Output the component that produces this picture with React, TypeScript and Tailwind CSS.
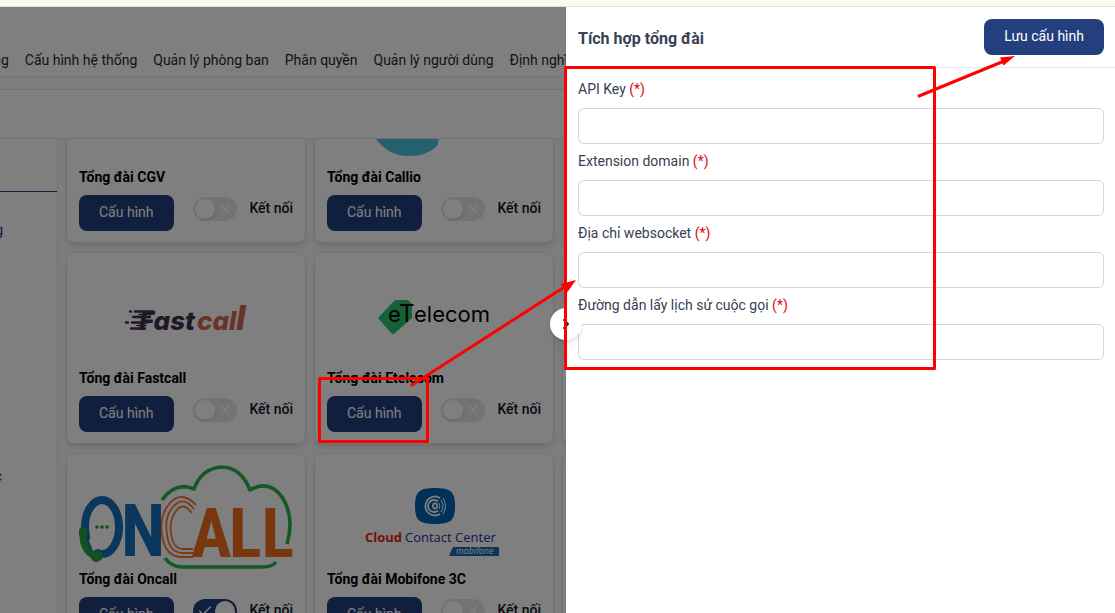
import { useState } from "react"
import type { ReactNode } from "react"
import { Check, ChevronRight, X } from "lucide-react"
import clsx from "clsx"

const navItems = [
  "ng",
  "Cấu hình hệ thống",
  "Quản lý phòng ban",
  "Phân quyền",
  "Quản lý người dùng",
  "Định nghĩ",
]

const fields = [
  { id: "api-key", label: "API Key" },
  { id: "extension-domain", label: "Extension domain" },
  { id: "websocket", label: "Địa chỉ websocket" },
  { id: "call-history", label: "Đường dẫn lấy lịch sử cuộc gọi" },
]

function CallioLogo() {
  return (
    <svg viewBox="0 0 214 104" className="h-[104px] w-full" aria-hidden="true">
      <path d="M43 66 Q56 93 82 93 Q100 93 110 83 Q112 79 112 70 V40 H43Z" fill="#4cc3e0" />
    </svg>
  )
}

function FastcallLogo() {
  return (
    <svg viewBox="0 0 214 104" className="h-[104px] w-full" aria-hidden="true">
      <g stroke="#43304f" strokeWidth="2.4" strokeLinecap="round">
        <path d="M56 47.5H74M51 47.5h1M54 53H71M53 58.5H68M47 58.5h2M52 64.5H66" />
        <path d="M60 50.5H72M58 61.5H67" strokeWidth="1.5" />
      </g>
      <g fontFamily="Inter, sans-serif" fontWeight="800" fontStyle="italic">
        <text x="60" y="66" fontSize="26" fill="#43304f">Fast</text>
        <text x="118" y="66" fontSize="26" fill="#d2664f">cal</text>
        <text x="157" y="66" fontSize="34" fill="#d2664f">l</text>
      </g>
    </svg>
  )
}

function EtelecomLogo() {
  return (
    <svg viewBox="0 0 214 104" className="h-[104px] w-full" aria-hidden="true">
      <path d="M51 54 L67 37 Q68 36 70 36 H80 Q81 36 82 37 L85 40 V54 L68 69 Q66 71 64 69Z" fill="#2bc46c" />
      <g fontFamily="Inter, sans-serif" fill="#000">
        <text x="61" y="58" fontSize="22">e</text>
        <text x="72" y="58" fontSize="24">T</text>
        <text x="87" y="58" fontSize="22">elecom</text>
      </g>
    </svg>
  )
}

function OncallLogo() {
  return (
    <svg viewBox="0 0 214 104" className="h-[104px] w-full" aria-hidden="true">
      <g fill="none" stroke="#2cb04a" strokeWidth="3.6" strokeLinejoin="round">
        <path d="M83 35 Q97 16 115 24 Q122 4 142 2 Q162 2 171 25 Q190 14 203 32 Q216 52 208 79" />
        <path d="M86 93 Q92 102 104 102 H184 Q193 102 197 97" />
      </g>
      {/* speech bubble with the handset */}
      <ellipse cx="23" cy="62" rx="17" ry="27" fill="none" stroke="#186eb8" strokeWidth="8" />
      <path d="M10 76 L13 68 L19 84 L14 86Z" fill="#fff" />
      <g fill="none" stroke="#24a53c" strokeLinecap="round">
        <path d="M4 67 Q3 86 18 92" strokeWidth="7" />
        <path d="M4 66 V69" strokeWidth="8" />
        <path d="M17 92 L19 91" strokeWidth="10" />
      </g>
      <g fill="#24a53c">
        <circle cx="18" cy="62" r="1.8" />
        <circle cx="23" cy="62" r="1.8" />
        <circle cx="28" cy="62" r="1.8" />
      </g>
      <g fill="none" stroke="#f0743a" strokeWidth="1.8">
        <path d="M117 40 Q103 25 91 38 Q80 50 83 70 Q86 92 103 92 H114" />
        <path d="M115 44 Q104 30 94 42 Q85 52 88 69 Q90 88 104 88 H114" />
        <path d="M113 48 Q104 36 97 46 Q90 55 92 68 Q94 84 104 84 H114" />
      </g>
      <g fontFamily="'Roboto Condensed', 'Liberation Sans Narrow', 'Liberation Sans', sans-serif" fontWeight="700">
        <text x="42" y="91" fontSize="72" fill="#186eb8">N</text>
        <text x="112" y="92" fontSize="68" fill="#f26f21">A</text>
        <text x="150" y="92" fontSize="68" fill="#f26f21">LL</text>
      </g>
    </svg>
  )
}

function MobifoneLogo() {
  return (
    <svg viewBox="0 0 214 104" className="h-[104px] w-full" aria-hidden="true">
      <path d="M108 23 C124 23 128 27 128 41 C128 55 124 59 108 59 C92 59 88 55 88 41 C88 27 92 23 108 23Z" fill="#0063b2" />
      <g fill="none" stroke="#fff">
        <path d="M113 33 A9.5 9.5 0 1 0 113 49" strokeWidth="1.8" />
        <path d="M111 36.5 A6 6 0 1 0 111 45.5" strokeWidth="1.8" />
        <ellipse cx="108" cy="41" rx="2.2" ry="2.6" strokeWidth="1.6" />
        <path d="M112 38 q2 3 0 6M114 35 q4 6 0 12M116 33 q5 8 0 16" strokeWidth="1" />
      </g>
      <g fontFamily="'Open Sans', sans-serif" fontSize="13">
        <text x="38" y="77" fill="#e8230c" fontWeight="700">Cloud</text>
        <text x="78" y="77" fill="#1f2f98" fontWeight="500">Contact Center</text>
      </g>
      <path d="M126 82 H172 V91 H122Z" fill="#1b69b5" />
      <text x="129" y="89" fontFamily="'DejaVu Sans', sans-serif" fontSize="8" fontStyle="italic" fill="#fff">
        mobifone
      </text>
    </svg>
  )
}

interface Provider {
  id: string
  name: string
  logo: ReactNode
  connected?: boolean
}

// null = thẻ nằm sau ngăn kéo
const providers: (Provider | null)[] = [
  { id: "cgv", name: "Tổng đài CGV", logo: <div className="h-[104px]" /> },
  { id: "callio", name: "Tổng đài Callio", logo: <CallioLogo /> },
  null,
  { id: "fastcall", name: "Tổng đài Fastcall", logo: <FastcallLogo /> },
  { id: "etelecom", name: "Tổng đài Etelecom", logo: <EtelecomLogo /> },
  null,
  { id: "oncall", name: "Tổng đài Oncall", logo: <OncallLogo />, connected: true },
  { id: "mobifone", name: "Tổng đài Mobifone 3C", logo: <MobifoneLogo /> },
  null,
]

function ConnectSwitch({ id, defaultOn }: { id: string; defaultOn?: boolean }) {
  const [on, setOn] = useState(!!defaultOn)

  return (
    <label htmlFor={id} className="flex h-7 items-center gap-3 text-sm font-medium text-gray-900">
      <span className="relative flex">
        <input
          id={id}
          type="checkbox"
          checked={on}
          onChange={e => setOn(e.target.checked)}
          className="h-6 w-11 appearance-none rounded-full bg-gray-200 checked:bg-[#233f7e]"
        />
        <span
          className={clsx(
            "absolute top-0.5 size-5 rounded-full bg-white shadow",
            on ? "right-0.5" : "left-0.5"
          )}
        />
        {on ? (
          <Check className="absolute top-1 left-1 size-4 text-white" />
        ) : (
          <X className="absolute top-1 right-1 size-4 text-white" />
        )}
      </span>
      <span className="pb-0.5">Kết nối</span>
    </label>
  )
}

function ProviderCard({ provider }: { provider: Provider | null }) {
  return (
    <li className="h-48 rounded-lg border border-gray-200 bg-white px-3 py-[11px] shadow-md">
      {provider && (
        <>
          {provider.logo}
          <h3 className="mb-2 text-sm leading-5 font-bold text-black">{provider.name}</h3>
          <div className="flex items-start justify-between">
            <button type="button" className="h-9 rounded-lg bg-[#233f7e] px-5 pb-0.5 text-sm text-white">
              Cấu hình
            </button>
            <ConnectSwitch id={`switch-${provider.id}`} defaultOn={provider.connected} />
          </div>
        </>
      )}
    </li>
  )
}

function SettingsPage() {
  return (
    <div className="flex h-full flex-col overflow-hidden bg-white">
      <header className="flex h-[70px] shrink-0 items-end border-b border-gray-200 pb-1.5">
        <nav className="flex w-[568px] justify-end gap-4 overflow-hidden text-sm leading-5 whitespace-nowrap text-gray-800">
          {navItems.map(item => (
            <a key={item} href="#">{item}</a>
          ))}
        </nav>
      </header>
      <div className="h-[13px] shrink-0 border-b border-gray-200 bg-[#f7fcf9]" />
      <div className="h-[49px] shrink-0 border-b border-gray-200" />
      <div className="flex min-h-0 flex-1">
        <aside className="flex w-[58px] shrink-0 flex-col border-r border-gray-200 text-sm leading-5 text-[#233f7e]">
          <div className="h-[53px] shrink-0 border-b border-[#233f7e]" />
          <a href="#" className="mt-7 flex w-[3px] justify-end overflow-hidden">g</a>
          <a href="#" className="mt-[226px] flex w-[2px] justify-end overflow-hidden">c</a>
        </aside>
        <main className="min-w-0 flex-1 overflow-hidden bg-gray-50">
          {/* danh sách đã cuộn xuống */}
          <ul className="-mt-[88px] grid grid-cols-[repeat(3,240px)] gap-x-2 gap-y-[9px] pl-2">
            {providers.map((provider, i) => (
              <ProviderCard key={i} provider={provider} />
            ))}
          </ul>
        </main>
      </div>
    </div>
  )
}

function ConfigDrawer() {
  return (
    <section className="relative min-w-0 flex-1 bg-white text-gray-700">
      <div className="flex items-center justify-between border-b border-gray-200 py-3 pr-[11px] pl-3">
        <h2 className="pt-1 text-base font-bold">Tích hợp tổng đài</h2>
        <button type="submit" form="config-form" className="h-9 rounded-lg bg-[#233f7e] px-5 pb-0.5 text-sm text-white">
          Lưu cấu hình
        </button>
      </div>
      <form
        id="config-form"
        onSubmit={e => e.preventDefault()}
        className="flex flex-col gap-2 py-3 pr-[11px] pl-3"
      >
        {fields.map(field => (
          <div key={field.id} className="flex flex-col gap-2.5">
            <label htmlFor={field.id} className="text-sm leading-[18px]">
              {field.label} <span className="text-red-600">(*)</span>
            </label>
            <input
              id={field.id}
              type="text"
              className="h-9 w-full rounded-md border border-gray-300 bg-white px-3 text-sm"
            />
          </div>
        ))}
      </form>
      <button
        type="button"
        aria-label="Đóng"
        className="absolute top-[301px] -left-4 flex size-8 items-center justify-center rounded-full bg-white text-gray-800 shadow-md"
      >
        <ChevronRight className="size-4" strokeWidth={3} />
      </button>
    </section>
  )
}

function Annotations() {
  return (
    <svg
      width="1115"
      height="613"
      className="pointer-events-none absolute top-0 left-0"
      aria-hidden="true"
    >
      <g fill="none" stroke="#ff0000" strokeWidth="3" strokeLinejoin="round" strokeLinecap="round">
        <rect x="565.5" y="67.5" width="369" height="301" />
        <rect x="319.5" y="378.5" width="108" height="63" />
        <path d="M412 385 L566 286" />
        <path d="M919 96 L1003 61.5" />
      </g>
      <path d="M576 280 L560.5 284 L567.5 292Z M1015 56 L1000 57.5 L1003.5 65.5Z" fill="#ff0000" />
    </svg>
  )
}

export default function App() {
  return (
    <div className="relative flex h-screen flex-col overflow-hidden font-[Roboto,'Noto_Sans',sans-serif]">
      <div className="h-[7px] shrink-0 border-b border-[#d9e5d3] bg-[#f8fcf2]" />
      <div className="relative min-h-0 flex-1">
        <SettingsPage />
        <div className="absolute inset-0 flex">
          <div className="w-[566px] shrink-0 bg-black/50" />
          <ConfigDrawer />
        </div>
      </div>
      <Annotations />
    </div>
  )
}
